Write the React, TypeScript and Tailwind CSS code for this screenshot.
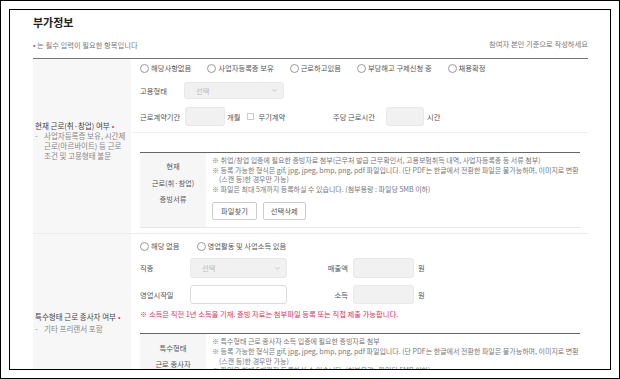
import { ChevronDown } from 'lucide-react';

const Radio = ({ label }: { label: string }) => (
    <label className="flex items-center gap-[2px]">
        <span className="w-[9px] h-[9px] rounded-full border border-[#999] bg-white" />
        <span>{label}</span>
    </label>
);

const Select = ({ className }: { className: string }) => (
    <div className={`flex items-center justify-between rounded-[3px] bg-[#f1f1f1] border border-[#e8e8e8] pl-[11px] pr-[5px] text-[#bbb] ${className}`}>
        <span>선택</span>
        <ChevronDown size={7} strokeWidth={1.5} className="text-[#999]" />
    </div>
);

const Box = ({ className }: { className: string }) => (
    <div className={`rounded-[3px] bg-[#f1f1f1] border border-[#e8e8e8] ${className}`} />
);

const Req = () => <span className="text-[#e4405f] ml-[2px]">•</span>;

function Attach({ title, notes }: { title: string[]; notes: string[][] }) {
    return (
        <div className="ml-[9px] mr-[8px] flex border-t border-[#666] border-b border-b-[#e6e6e6]">
            <div className="w-[66px] shrink-0 bg-[#f6f6f6] flex flex-col items-center justify-center pb-[14px] text-center leading-[16.5px] text-[#555]">
                {title.map(t => (
                    <span key={t}>{t}</span>
                ))}
            </div>
            <div className="flex-1 pl-[6px] pt-[3px] pb-[7px] text-[7px] leading-[9.6px] text-[#777] whitespace-nowrap">
                {notes.map((n, i) => (
                    <div key={i}>
                        <p>※ {n[0]}</p>
                        {n[1] && <p className="pl-[7px]">{n[1]}</p>}
                    </div>
                ))}
                <div className="mt-[8px] flex gap-[6px] text-[7.3px] text-[#555]">
                    <button className="h-[18px] px-[8px] border border-[#ccc] rounded-[2px] bg-white">파일찾기</button>
                    <button className="h-[18px] px-[7px] border border-[#ccc] rounded-[2px] bg-white">선택삭제</button>
                </div>
            </div>
        </div>
    );
}

const FORMAT_NOTE = [
    '등록 가능한 형식은 gif, jpg, jpeg, bmp, png, pdf 파일입니다. (단 PDF는 한글에서 전환한 파일은 불가능하며, 이미지로 변환',
    '(스캔 등)한 경우만 가능)',
];
const COUNT_NOTE = ['파일은 최대 5개까지 등록하실 수 있습니다. (첨부용량 : 파일당 5MB 이하)'];

export default function App() {
    return (
        <div className="w-[620px] h-[379px] bg-white border border-black p-[8px] font-['Noto_Sans_CJK_KR',sans-serif] text-[#555]">
            <div className="h-full border border-black overflow-hidden pl-[23px] pr-[22px] pt-[4px]">
                <h2 className="text-[11px] leading-[16px] font-bold text-[#222]">부가정보</h2>
                <div className="mt-[10px] flex items-center justify-between text-[7.3px] leading-[10px] text-[#777]">
                    <p>
                        <span className="text-[#e4405f]">•</span> 는 필수 입력이 필요한 항목입니다
                    </p>
                    <p className="-mt-[2px]">참여자 본인 기준으로 작성하세요</p>
                </div>

                <div className="mt-[8px] border-t border-[#777] text-[7.3px] leading-[10px]">
                    {/* 현재 근로 */}
                    <div className="flex border-b border-[#ececec]">
                        <div className="w-[98px] shrink-0 bg-[#f7f7f7] flex flex-col justify-center pl-[2px] pb-[10px] text-[7.5px]">
                            <p className="text-[#444]">
                                현재 근로(취·창업) 여부<Req />
                            </p>
                            <div className="flex text-[#888]">
                                <span className="w-[9px] shrink-0">-</span>
                                <span>
                                    사업자등록증 보유, 시간제
                                    <br />
                                    근로(아르바이트) 등 근로
                                    <br />
                                    조건 및 고용형태 불문
                                </span>
                            </div>
                        </div>
                        <div className="flex-1 pb-[5px]">
                            <div className="pl-[9px] pb-[6px] border-b border-[#f0f0f0]">
                                <div className="h-[18px] flex items-center gap-[16px]">
                                    <Radio label="해당사항없음" />
                                    <Radio label="사업자등록증 보유" />
                                    <Radio label="근로하고있음" />
                                    <Radio label="부당해고 구제신청 중" />
                                    <Radio label="채용확정" />
                                </div>
                                <div className="mt-[5px] h-[17px] flex items-center">
                                    <span className="w-[44px]">고용형태</span>
                                    <Select className="w-[100px] h-[17px]" />
                                </div>
                                <div className="mt-[8px] h-[19px] flex items-center">
                                    <div className="w-[193px] flex items-center">
                                        <span className="w-[45px]">근로계약기간</span>
                                        <Box className="w-[40px] h-[19px]" />
                                        <span className="ml-[2px]">개월</span>
                                        <span className="ml-[7px] w-[7px] h-[7px] border border-[#ccc] bg-white" />
                                        <span className="ml-[4px]">무기계약</span>
                                    </div>
                                    <span className="w-[53px]">주당 근로시간</span>
                                    <Box className="w-[38px] h-[19px]" />
                                    <span className="ml-[3px]">시간</span>
                                </div>
                            </div>
                            <div className="mt-[19px]">
                                <Attach
                                    title={['현재', '근로(취·창업)', '증빙서류']}
                                    notes={[
                                        ['취업/창업 입증에 필요한 증빙자료 첨부(근무처 발급 근무확인서, 고용보험취득 내역, 사업자등록증 등 서류 첨부)'],
                                        FORMAT_NOTE,
                                        COUNT_NOTE,
                                    ]}
                                />
                            </div>
                        </div>
                    </div>

                    {/* 특수형태 근로 */}
                    <div className="flex border-b border-[#ececec]">
                        <div className="w-[98px] shrink-0 bg-[#f7f7f7] flex flex-col justify-center pl-[2px] pb-[4px] text-[7.5px]">
                            <p className="text-[#444]">
                                특수형태 근로 종사자 여부<Req />
                            </p>
                            <div className="flex text-[#888] mt-[2px]">
                                <span className="w-[9px] shrink-0">-</span>
                                <span>기타 프리랜서 포함</span>
                            </div>
                        </div>
                        <div className="flex-1 pb-[5px]">
                            <div className="pl-[9px] pt-[3px]">
                                <div className="h-[18px] flex items-center gap-[17px]">
                                    <Radio label="해당 없음" />
                                    <Radio label="영업활동 및 사업소득 있음" />
                                </div>
                                <div className="mt-[3px] h-[20px] flex items-center">
                                    <span className="w-[50px]">직종</span>
                                    <Select className="w-[97px] h-[20px]" />
                                    <span className="w-[66px] pr-[5px] text-right">매출액</span>
                                    <Box className="w-[61px] h-[20px]" />
                                    <span className="ml-[4px]">원</span>
                                </div>
                                <div className="mt-[7px] h-[19px] flex items-center">
                                    <span className="w-[50px]">영업시작일</span>
                                    <div className="w-[97px] h-[19px] rounded-[3px] bg-white border border-[#ddd]" />
                                    <span className="w-[66px] pr-[5px] text-right">소득</span>
                                    <Box className="w-[61px] h-[19px]" />
                                    <span className="ml-[4px]">원</span>
                                </div>
                                <p className="mt-[5px] text-[#e0305a]">
                                    ※ 소득은 직전 1년 소득을 기재. 증빙 자료는 첨부파일 등록 또는 직접 제출 가능합니다.
                                </p>
                            </div>
                            <div className="mt-[14px]">
                                <Attach
                                    title={['특수형태', '근로 종사자', '증빙서류']}
                                    notes={[['특수형태 근로 종사자 소득 입증에 필요한 증빙자료 첨부'], FORMAT_NOTE, COUNT_NOTE]}
                                />
                            </div>
                        </div>
                    </div>
                </div>
            </div>
        </div>
    );
}
